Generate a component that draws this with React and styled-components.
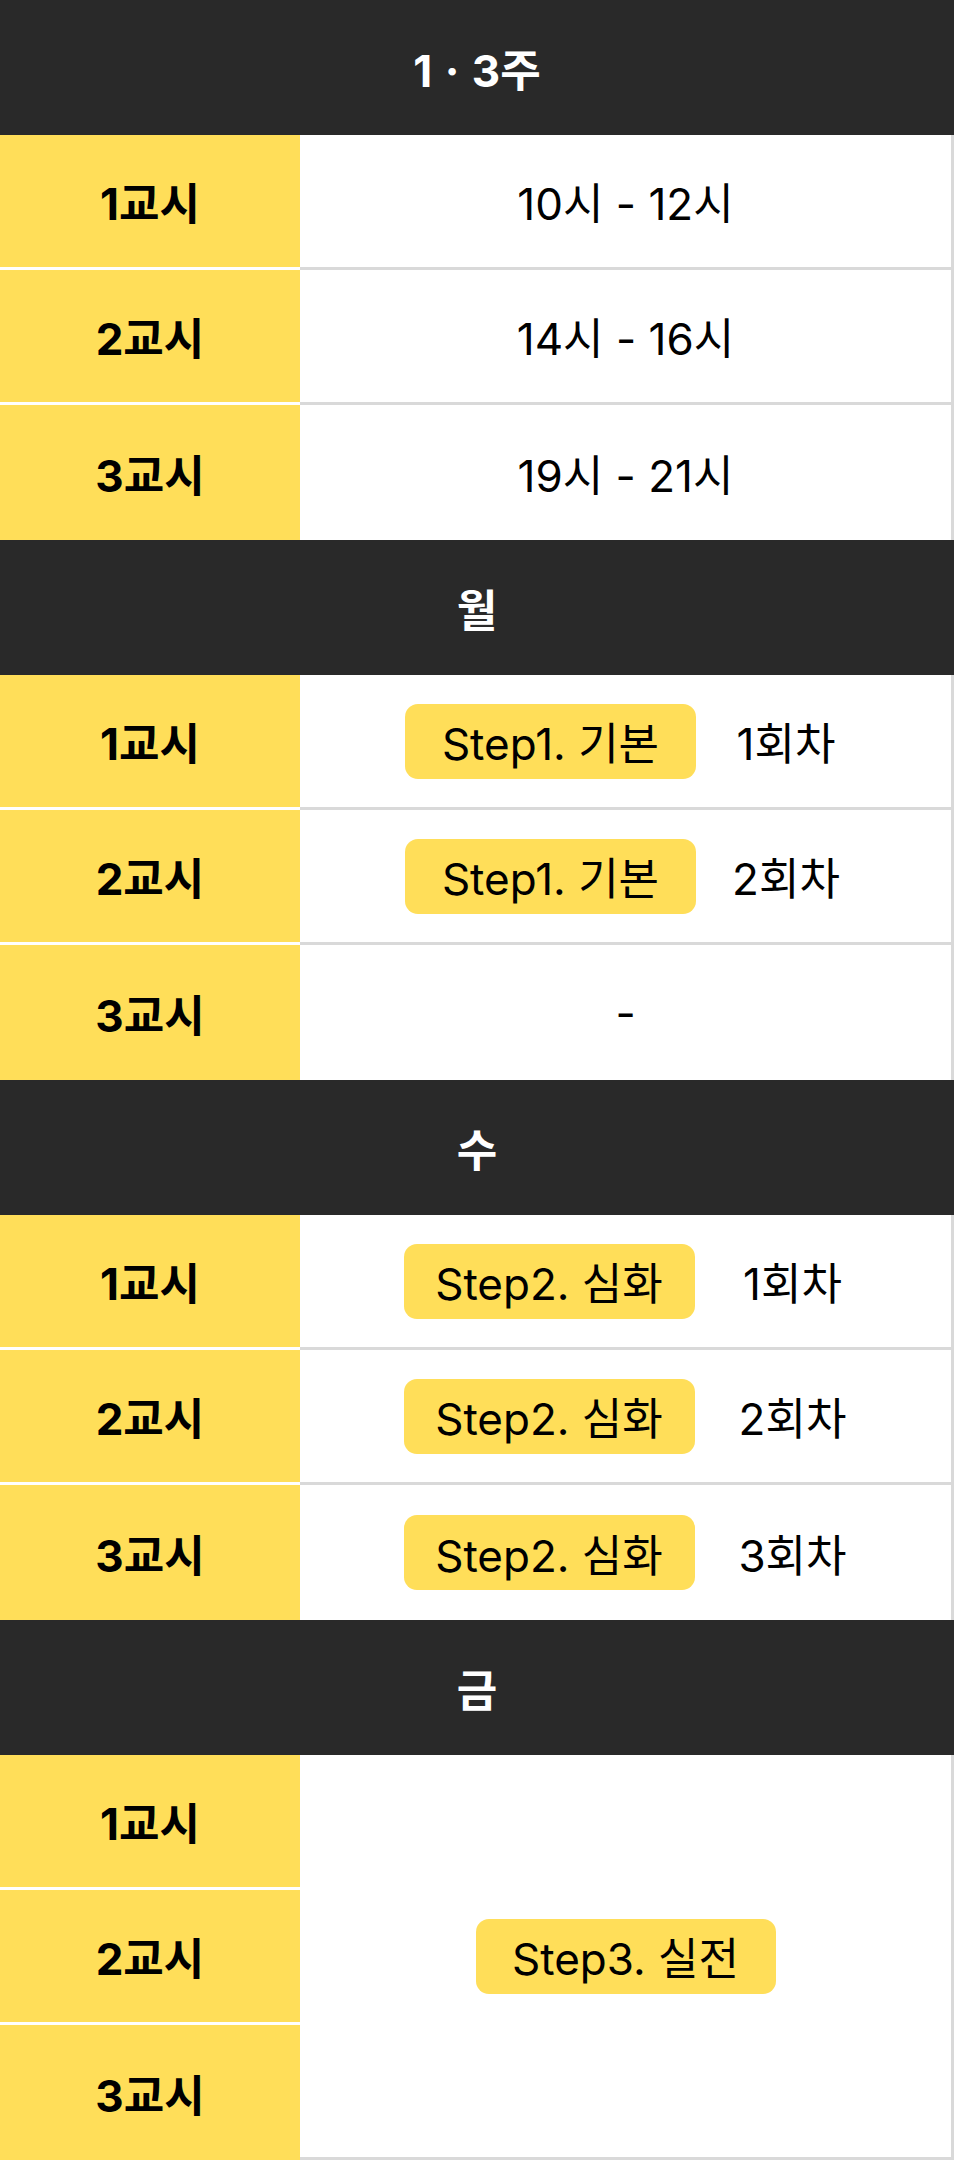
import React from "react";
import styled, { createGlobalStyle } from "styled-components";

const GlobalStyle = createGlobalStyle`
  body {
    margin: 0;
    font-family: "Inter", "Noto Sans CJK KR", sans-serif;
    background: #fff;
    color: #000;
  }
`;

const Schedule = styled.div`
  width: 954px;
`;

const Group = styled.section`
  display: grid;
  grid-template-columns: 300px 1fr;
`;

const GroupHeader = styled.h2`
  grid-column: 1 / -1;
  margin: 0;
  height: 135px;
  display: flex;
  align-items: center;
  justify-content: center;
  background: #292929;
  color: #fff;
  font-size: 44px;
  font-weight: 700;
  word-spacing: 2px;
`;

const Period = styled.div`
  box-sizing: border-box;
  height: 135px;
  display: flex;
  align-items: center;
  justify-content: center;
  background: #ffde59;
  font-size: 44px;
  font-weight: 700;
  border-bottom: ${(p) => (p.$last ? "none" : "3px solid #fff")};
`;

const Cell = styled.div`
  box-sizing: border-box;
  grid-row: ${(p) => (p.$span ? `span ${p.$span}` : "auto")};
  display: flex;
  align-items: center;
  justify-content: center;
  background: #fff;
  font-size: 44px;
  font-weight: 400;
  border-right: 3px solid #d9d9d9;
  border-bottom: ${(p) => (p.$last ? "none" : "3px solid #d9d9d9")};
`;

const Badge = styled.span`
  box-sizing: border-box;
  flex: none;
  width: ${(p) => p.$width}px;
  height: 75px;
  display: flex;
  align-items: center;
  justify-content: center;
  background: #ffde59;
  border-radius: 13px;
  white-space: nowrap;
`;

const Count = styled.span`
  flex: none;
  width: ${(p) => p.$width}px;
  margin-left: ${(p) => p.$gap}px;
  text-align: center;
  white-space: nowrap;
`;

const groups = [
  {
    title: "1 · 3주",
    rows: ["10시 - 12시", "14시 - 16시", "19시 - 21시"],
  },
  {
    title: "월",
    countWidth: 120,
    countGap: 30,
    rows: [
      { step: "Step1. 기본", count: "1회차" },
      { step: "Step1. 기본", count: "2회차" },
      "-",
    ],
  },
  {
    title: "수",
    countWidth: 110,
    countGap: 43,
    rows: [
      { step: "Step2. 심화", count: "1회차" },
      { step: "Step2. 심화", count: "2회차" },
      { step: "Step2. 심화", count: "3회차" },
    ],
  },
  {
    title: "금",
    merged: "Step3. 실전",
  },
];

const periods = ["1교시", "2교시", "3교시"];

const App = () => {
  return (
    <>
      <GlobalStyle />
      <Schedule>
        {groups.map((group, gi) => {
          const lastGroup = gi === groups.length - 1;
          return (
            <Group key={gi}>
              <GroupHeader>{group.title}</GroupHeader>
              {periods.map((period, i) => {
                const last = i === periods.length - 1;
                if (group.merged) {
                  return (
                    <React.Fragment key={i}>
                      <Period $last={last}>{period}</Period>
                      {i === 0 && (
                        <Cell $span={3}>
                          <Badge $width={300}>{group.merged}</Badge>
                        </Cell>
                      )}
                    </React.Fragment>
                  );
                }
                const row = group.rows[i];
                return (
                  <React.Fragment key={i}>
                    <Period $last={last}>{period}</Period>
                    <Cell $last={last && !lastGroup}>
                      {typeof row === "string" ? (
                        row
                      ) : (
                        <>
                          <Badge $width={291}>{row.step}</Badge>
                          <Count $width={group.countWidth} $gap={group.countGap}>
                            {row.count}
                          </Count>
                        </>
                      )}
                    </Cell>
                  </React.Fragment>
                );
              })}
            </Group>
          );
        })}
      </Schedule>
    </>
  );
};

export default App;
